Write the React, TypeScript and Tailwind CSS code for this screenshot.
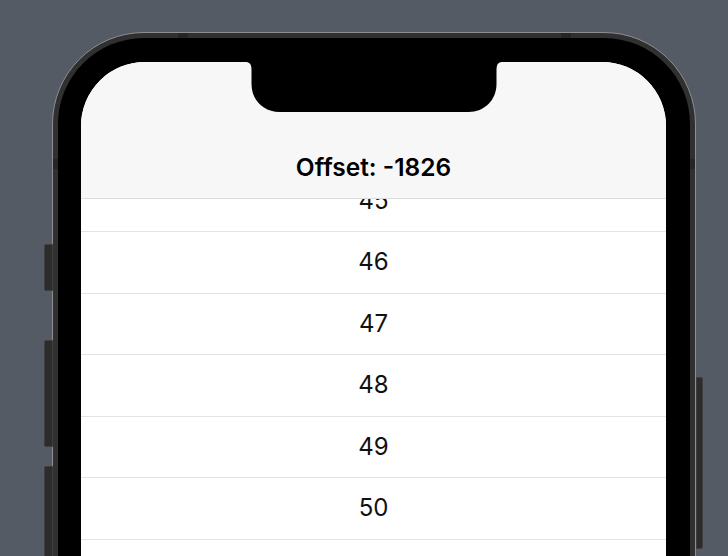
const rows = [45, 46, 47, 48, 49, 50]

function Notch() {
  return (
    <svg
      className="absolute left-1/2 top-0 z-20 -translate-x-1/2"
      width="257"
      height="50"
      viewBox="0 0 257 50"
    >
      <path
        d="M0 0 H257 C253 0 251 2 251 8 V22 C251 38 239 50 223 50 H34 C18 50 6 38 6 22 V8 C6 2 4 0 0 0 Z"
        fill="#000"
      />
    </svg>
  )
}

export default function App() {
  return (
    <div className="h-[556px] w-[728px] overflow-hidden bg-[#545b64] pl-[52px] pt-[32px]">
      <div className="relative h-[900px] w-[644px] rounded-[92px] border border-[#8e8e8e] bg-[#303030] p-[5px]">
        {/* side buttons */}
        <div className="absolute left-[-9px] top-[211px] h-[47px] w-[9px] rounded-l-[2px] border border-[#3e3e3e] bg-[#2c2c2c]" />
        <div className="absolute left-[-9px] top-[307px] h-[107px] w-[9px] rounded-l-[2px] border border-[#3e3e3e] bg-[#2c2c2c]" />
        <div className="absolute left-[-9px] top-[433px] h-[140px] w-[9px] rounded-l-[2px] border border-[#3e3e3e] bg-[#2c2c2c]" />
        <div className="absolute right-[-8px] top-[344px] h-[172px] w-[7px] rounded-r-[2px] border border-[#3e3e3e] bg-[#2c2c2c]" />
        {/* antenna bands */}
        <div className="absolute left-[125px] top-0 h-[5px] w-[10px] bg-[#252525]" />
        <div className="absolute left-[508px] top-0 h-[5px] w-[10px] bg-[#252525]" />
        <div className="absolute left-0 top-[126px] h-[10px] w-[5px] bg-[#252525]" />
        <div className="absolute right-0 top-[126px] h-[10px] w-[5px] bg-[#252525]" />

        <div className="h-full rounded-[86px] bg-black pl-[23px] pr-[24px] pt-[24px]">
          <div className="relative flex h-full flex-col overflow-hidden rounded-[64px] bg-white font-['Inter',sans-serif] text-[#111]">
            <div className="relative z-10 flex h-[137px] shrink-0 items-end justify-center border-b border-[#dcdcdc] bg-[#f7f7f7] pb-[17px]">
              <span className="text-[24.5px] font-semibold leading-[28px] text-black">
                Offset: -1826
              </span>
            </div>
            <Notch />
            <div className="mt-[-28.5px] flex flex-col">
              {rows.map((n) => (
                <div
                  key={n}
                  className="flex h-[61.5px] items-center justify-center border-b border-[#e3e3e3] text-[24px] leading-none"
                >
                  {n}
                </div>
              ))}
            </div>
          </div>
        </div>
      </div>
    </div>
  )
}
